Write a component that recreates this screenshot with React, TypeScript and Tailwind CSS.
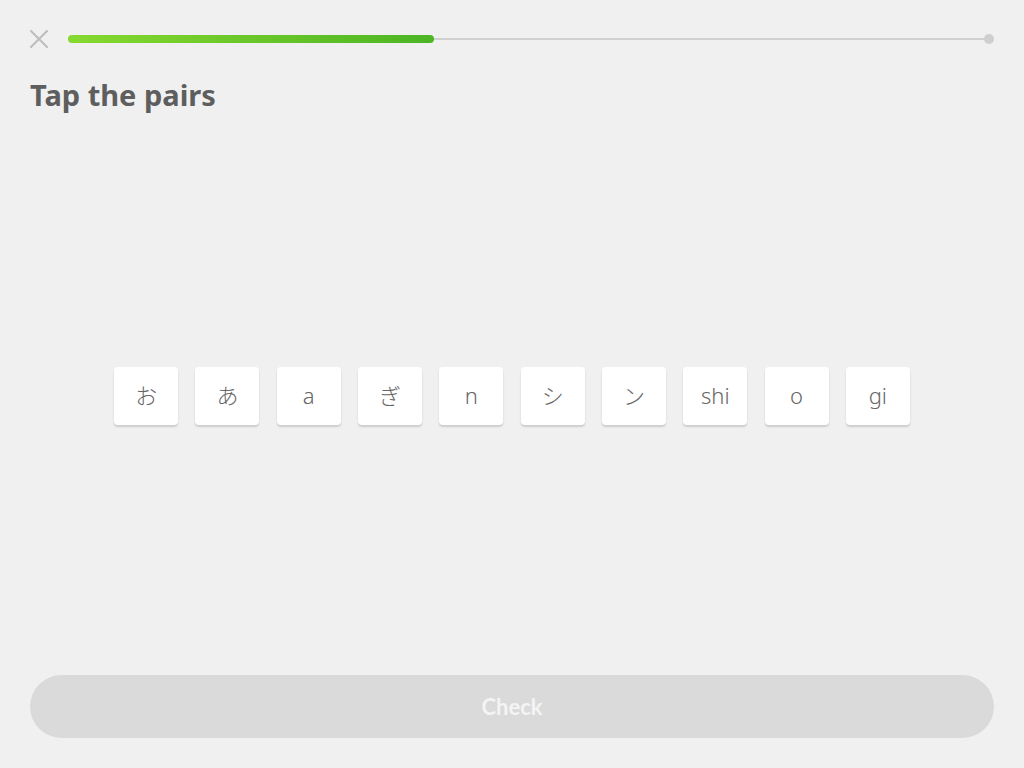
const tiles = ["お", "あ", "a", "ぎ", "n", "シ", "ン", "shi", "o", "gi"];

const App = () => {
  return (
    <div className="w-full h-screen bg-[#f0f0f0] flex flex-col px-[30px] font-['Lato','Noto_Sans_CJK_JP',sans-serif]">
      <div className="flex items-center pt-[30px] h-[48px]">
        <svg width="18" height="18" viewBox="0 0 18 18" className="shrink-0">
          <path d="M1 1 L17 17 M17 1 L1 17" stroke="#bdbdbd" strokeWidth="2" strokeLinecap="round" />
        </svg>
        <div className="ml-[20px] flex-1 relative h-[10px] flex items-center">
          <div className="w-full h-[2px] bg-[#d0d0d0]" />
          <div className="absolute left-0 top-[1px] h-[8px] w-[366px] rounded-full bg-gradient-to-r from-[#86d92f] to-[#4bb524]" />
          <div className="absolute right-0 top-0 w-[10px] h-[10px] rounded-full bg-[#cfcfcf]" />
        </div>
      </div>
      <h1 className="mt-[27px] text-[29px] leading-[39px] font-bold text-[#5e5e5e] font-['Noto_Sans',sans-serif]">
        Tap the pairs
      </h1>
      <div className="flex-1 flex items-center justify-center pt-[2px]">
        <div className="flex gap-[17.3px]">
          {tiles.map((t) => (
            <div
              key={t}
              className="w-[64px] h-[58px] bg-white rounded-[4px] shadow-[0_2px_2px_rgba(0,0,0,0.15)] flex items-center justify-center text-[22px] text-[#666666] font-['Noto_Sans','Noto_Sans_CJK_JP',sans-serif] font-light"
            >
              {t}
            </div>
          ))}
        </div>
      </div>
      <button className="mb-[30px] h-[63px] w-full rounded-full bg-[#dadada] text-[#f4f4f4] text-[22px] font-bold">
        Check
      </button>
    </div>
  );
};

export default App;
